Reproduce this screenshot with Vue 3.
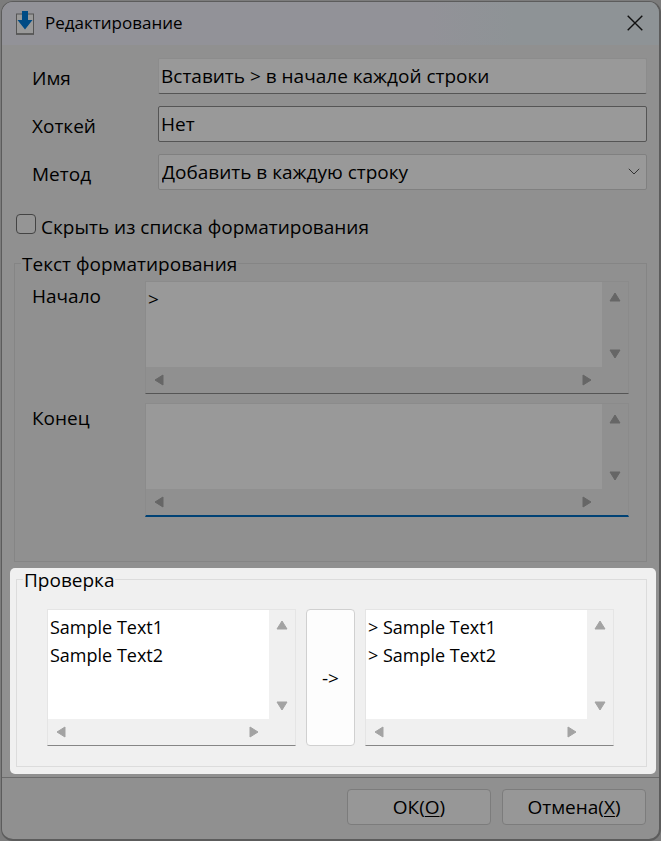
<script setup>
import { ref, computed } from 'vue'

const name = ref('Вставить > в начале каждой строки')
const hotkey = ref('Нет')
const method = ref('each')
const hidden = ref(false)
const prefix = ref('>')
const suffix = ref('')
const sample = ref('Sample Text1\nSample Text2')
const result = computed(() =>
  sample.value
    .split('\n')
    .map((line) => `${prefix.value.trim()} ${line}${suffix.value}`)
    .join('\n')
)
</script>

<template>
  <main class="dialog">
    <header class="titlebar">
      <svg class="app-icon" viewBox="0 0 20 26" aria-hidden="true">
        <rect x="1.5" y="4" width="17" height="20" fill="#999" stroke="#555" />
        <path d="M1 24h18" stroke="#555" stroke-width="1.500" />
        <path d="M7 1h6v9h4.500L10 19.500 2.500 10H7z" fill="#004b85" />
      </svg>
      <h1>Редактирование</h1>
      <button class="close" type="button" aria-label="Закрыть">
        <svg viewBox="0 0 16 16" aria-hidden="true"><path d="M.7.7l14.600 14.600M15.300.7L.7 15.300" /></svg>
      </button>
    </header>

    <section class="fields">
      <label for="name">Имя</label>
      <input id="name" v-model="name" class="control underlined" type="text" />
      <label for="hotkey">Хоткей</label>
      <input id="hotkey" v-model="hotkey" class="control outlined" type="text" />
      <label for="method">Метод</label>
      <div class="select">
        <select id="method" v-model="method" class="control">
          <option value="each">Добавить в каждую строку</option>
        </select>
        <svg class="chevron" viewBox="0 0 12 7" aria-hidden="true"><path d="M.8.8L6 6 11.200.8" /></svg>
      </div>
    </section>

    <label class="check">
      <input v-model="hidden" type="checkbox" />
      <span>Скрыть из списка форматирования</span>
    </label>

    <fieldset class="format">
      <legend>Текст форматирования</legend>
      <div class="format-grid">
        <label for="prefix">Начало</label>
        <div class="memo">
          <textarea id="prefix" v-model="prefix" wrap="off"></textarea>
          <div class="bar vertical">
            <svg viewBox="0 0 12 10"><path d="M6 1L11 9H1z" /></svg>
            <svg viewBox="0 0 12 10"><path d="M6 9L11 1H1z" /></svg>
          </div>
          <div class="bar horizontal">
            <svg viewBox="0 0 10 12"><path d="M1 6L9 1v10z" /></svg>
            <svg viewBox="0 0 10 12"><path d="M9 6L1 1v10z" /></svg>
          </div>
        </div>
        <label for="suffix">Конец</label>
        <div class="memo focused">
          <textarea id="suffix" v-model="suffix" wrap="off"></textarea>
          <div class="bar vertical">
            <svg viewBox="0 0 12 10"><path d="M6 1L11 9H1z" /></svg>
            <svg viewBox="0 0 12 10"><path d="M6 9L11 1H1z" /></svg>
          </div>
          <div class="bar horizontal">
            <svg viewBox="0 0 10 12"><path d="M1 6L9 1v10z" /></svg>
            <svg viewBox="0 0 10 12"><path d="M9 6L1 1v10z" /></svg>
          </div>
        </div>
      </div>
    </fieldset>

    <section class="spotlight">
      <fieldset class="preview">
        <legend>Проверка</legend>
        <div class="preview-row">
          <div class="memo light">
            <textarea v-model="sample" wrap="off" aria-label="Исходный текст"></textarea>
            <div class="bar vertical">
              <svg viewBox="0 0 12 10"><path d="M6 1L11 9H1z" /></svg>
              <svg viewBox="0 0 12 10"><path d="M6 9L11 1H1z" /></svg>
            </div>
            <div class="bar horizontal">
              <svg viewBox="0 0 10 12"><path d="M1 6L9 1v10z" /></svg>
              <svg viewBox="0 0 10 12"><path d="M9 6L1 1v10z" /></svg>
            </div>
          </div>
          <button class="convert" type="button">-&gt;</button>
          <div class="memo light">
            <textarea :value="result" wrap="off" readonly aria-label="Результат"></textarea>
            <div class="bar vertical">
              <svg viewBox="0 0 12 10"><path d="M6 1L11 9H1z" /></svg>
              <svg viewBox="0 0 12 10"><path d="M6 9L11 1H1z" /></svg>
            </div>
            <div class="bar horizontal">
              <svg viewBox="0 0 10 12"><path d="M1 6L9 1v10z" /></svg>
              <svg viewBox="0 0 10 12"><path d="M9 6L1 1v10z" /></svg>
            </div>
          </div>
        </div>
      </fieldset>
    </section>

    <footer class="actions">
      <button type="button">ОК(<u>O</u>)</button>
      <button type="button">Отмена(<u>X</u>)</button>
    </footer>
  </main>
</template>

<style>
body {
  background: #7c7c7c;
}
</style>

<style scoped>
* {
  box-sizing: border-box;
}
.dialog,
.dialog input,
.dialog select,
.dialog textarea,
.dialog button {
  font-family: "Open Sans", "Noto Sans", sans-serif;
  font-size: 19px;
  color: #000;
}
.dialog {
  margin: 1px 0 1px 1px;
  border: 1px solid #5c5c5c;
  border-bottom-width: 2px;
  border-right-width: 2px;
  border-radius: 12px;
  background: #909090;
  overflow: hidden;
}
.titlebar {
  display: flex;
  align-items: center;
  height: 43px;
  padding: 0 16px 2px 13px;
  background: linear-gradient(90deg, #929298 0%, #929298 65%, #8e9396 78%);
}
.app-icon {
  width: 20px;
  height: 26px;
}
h1 {
  flex: 1;
  margin: 0 0 0 10px;
  font-size: 17px;
  font-weight: 400;
}
.close {
  display: flex;
  padding: 0;
  border: 0;
  background: none;
}
.close svg {
  width: 16px;
  height: 16px;
  fill: none;
  stroke: #111;
  stroke-width: 1.400;
}
.fields {
  display: grid;
  grid-template-columns: 126px 1fr;
  row-gap: 12px;
  align-items: center;
  padding: 13px 12px 0 30px;
}
.fields label {
  padding-top: 3px;
}
.control {
  display: block;
  width: 100%;
  height: 36px;
  margin: 0;
  padding: 0 3px 0 2px;
  border: 1px solid #8c8c8c;
  border-radius: 2px;
  outline: 0;
  background: #999;
}
.underlined {
  border-bottom-color: #555;
}
.outlined {
  border-color: #555;
}
.select {
  position: relative;
}
.select .control {
  appearance: none;
  padding-left: 3px;
  border-color: #808080;
}
.chevron {
  position: absolute;
  top: 14px;
  right: 7px;
  width: 12px;
  height: 7px;
  fill: none;
  stroke: #333;
  pointer-events: none;
}
.check {
  display: flex;
  align-items: flex-start;
  gap: 5px;
  height: 26px;
  margin: 24px 14px 0;
  line-height: 26px;
}
.check input {
  appearance: none;
  width: 20px;
  height: 20px;
  margin: 0;
  border: 1px solid #444;
  border-radius: 4px;
  background: #959595;
}
fieldset {
  min-width: 0;
  border: 1px solid #858585;
}
legend {
  margin: 0;
  padding: 2px 1px 0;
  line-height: 20px;
}
.format {
  margin: 12px 12px 0;
  padding: 7px 17px 44px;
}
.format legend {
  margin-left: -11px;
}
.format-grid {
  display: grid;
  grid-template-columns: 113px 1fr;
  row-gap: 9px;
}
.format-grid label {
  line-height: 30px;
}
.memo {
  display: grid;
  flex: 1;
  grid-template-columns: 1fr 26px;
  grid-template-rows: 1fr 26px;
  min-width: 0;
  height: 113px;
  border: 1px solid #8b8b8b;
  border-bottom-color: #555;
  background: #909090;
}
.memo.focused {
  height: 114px;
  border-bottom: 2px solid #004275;
}
.memo textarea {
  width: 100%;
  height: 100%;
  min-width: 0;
  margin: 0;
  padding: 3px 2px;
  border: 0;
  outline: 0;
  resize: none;
  overflow: hidden;
  background: #999;
  line-height: 28px;
}
.bar {
  display: flex;
  align-items: center;
  justify-content: space-between;
}
.bar svg {
  fill: #666;
  stroke: #666;
  stroke-linejoin: round;
}
.vertical {
  flex-direction: column;
  padding: 10px 0 8px;
}
.vertical svg {
  width: 12px;
  height: 10px;
}
.horizontal {
  padding: 0 10px 0 8px;
}
.horizontal svg {
  width: 10px;
  height: 12px;
}
.spotlight {
  margin: 6px 3px 0 8px;
  padding: 0 9px 7px 6px;
  border-radius: 5px;
  background: #f0f0f0;
}
.preview {
  margin: 0;
  padding: 19px 32px 20px 30px;
  border-color: #dcdcdc;
}
.preview legend {
  margin-left: -24px;
}
.preview-row {
  display: flex;
  gap: 10px;
}
.light {
  height: 137px;
  border-color: #e5e5e5;
  border-bottom-color: #868686;
  background: #f0f0f0;
}
.light textarea {
  background: #fff;
  font-size: 18px;
}
.light .bar svg {
  fill: #a3a3a3;
  stroke: #a3a3a3;
}
.convert {
  width: 49px;
  padding: 0;
  border: 1px solid #d0d0d0;
  border-radius: 4px;
  background: #fdfdfd;
}
.actions {
  display: flex;
  justify-content: flex-end;
  gap: 11px;
  margin-top: 3px;
  padding: 11px 13px 14px;
  border-top: 1px solid #6c6c6c;
}
.actions button {
  width: 144px;
  height: 36px;
  padding: 0;
  border: 1px solid #7c7c7c;
  border-radius: 4px;
  background: #979797;
}
u {
  text-underline-offset: 2px;
}
</style>
